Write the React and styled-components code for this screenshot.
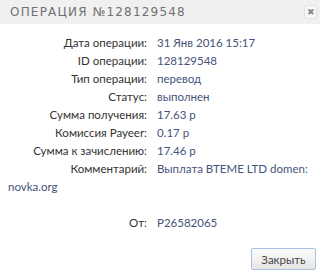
import React from "react";
import styled, { createGlobalStyle } from "styled-components";

const GlobalStyle = createGlobalStyle`
    html, body {
        margin: 0;
        padding: 0;
        background: #ffffff;
    }
    body {
        font-family: Lato, "Open Sans", sans-serif;
    }
`;

const Dialog = styled.div`
    width: 320px;
    height: 274px;
    background: #ffffff;
    display: flex;
    flex-direction: column;
`;

const Header = styled.div`
    height: 24px;
    background: #f0f0f0;
    display: flex;
    align-items: center;
    justify-content: space-between;
    padding: 0 3px 0 10px;
`;

const Title = styled.h4`
    margin: 0;
    font-family: "DejaVu Sans", sans-serif;
    font-size: 12px;
    font-weight: normal;
    letter-spacing: 1.2px;
    color: #707070;
    text-transform: uppercase;
`;

const CloseButton = styled.button`
    width: 13px;
    height: 14px;
    padding: 0;
    border: 1px solid #e2e2e2;
    border-radius: 2px;
    background: #f6f6f6;
    color: #888;
    font-size: 9px;
    line-height: 12px;
    display: flex;
    align-items: center;
    justify-content: center;
`;

const Body = styled.div`
    padding: 10px 8px 0 8px;
    flex: 1;
`;

const Row = styled.div`
    font-size: 11.5px;
    line-height: 18px;
    color: #333333;
    min-height: ${props => (props.$gap ? 54 : 18)}px;
`;

const Label = styled.span`
    display: inline-block;
    width: 139px;
    text-align: right;
    margin-right: 10px;
`;

const Value = styled.span`
    color: #45537c;
`;

const Footer = styled.div`
    display: flex;
    justify-content: flex-end;
    padding: 0 4px 4px 0;
`;

const Button = styled.button`
    width: 65px;
    height: 22px;
    border: 1px solid #a9c1e2;
    border-radius: 2px;
    background: linear-gradient(#fbfbfb, #e6e6e6);
    color: #444;
    font-family: inherit;
    font-size: 11.5px;
`;

const rows = [
    ["Дата операции:", "31 Янв 2016 15:17"],
    ["ID операции:", "128129548"],
    ["Тип операции:", "перевод"],
    ["Статус:", "выполнен"],
    ["Сумма получения:", "17.63 р"],
    ["Комиссия Payeer:", "0.17 р"],
    ["Сумма к зачислению:", "17.46 р"],
    ["Комментарий:", "Выплата BTEME LTD domen: novka.org", true],
    ["От:", "P26582065"]
];

export default function App() {
    return (
        <Dialog>
            <GlobalStyle />
            <Header>
                <Title>Операция №128129548</Title>
                <CloseButton aria-label="Закрыть">✖</CloseButton>
            </Header>
            <Body>
                {rows.map(([label, value, gap]) => (
                    <Row key={label} $gap={gap}>
                        <Label>{label}</Label>
                        <Value>{value}</Value>
                    </Row>
                ))}
            </Body>
            <Footer>
                <Button>Закрыть</Button>
            </Footer>
        </Dialog>
    );
}
